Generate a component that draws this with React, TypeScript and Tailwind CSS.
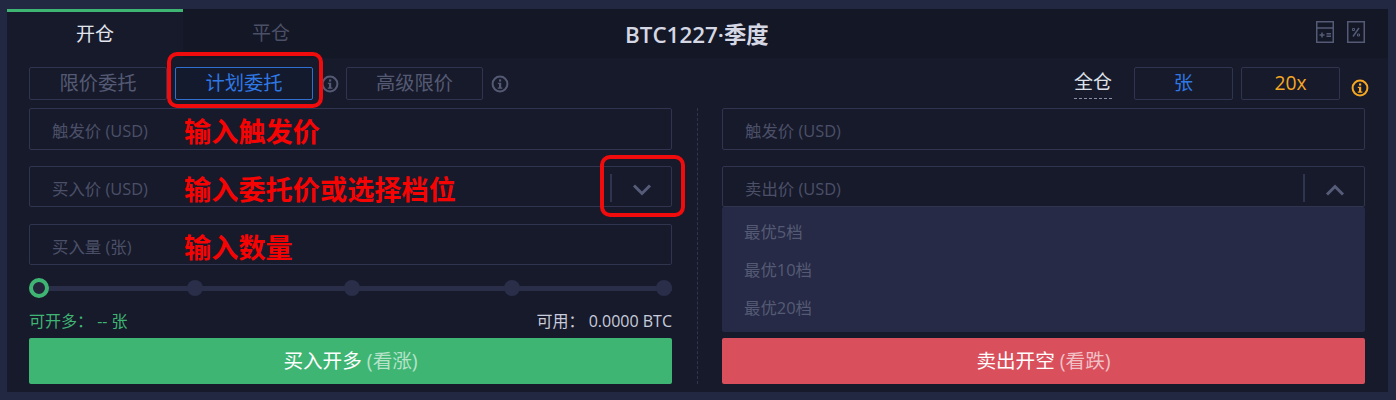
import React from "react";

const FONT = "font-['Open_Sans','Noto_Sans_CJK_SC',sans-serif]";

function Info({ className = "" }: { className?: string }) {
  return (
    <svg viewBox="0 0 18 18" className={className} fill="none">
      <circle cx="9" cy="9" r="7.4" stroke="currentColor" strokeWidth="2" />
      <rect x="8" y="4.4" width="2.2" height="2.2" fill="currentColor" />
      <path d="M6.8 7.8h3.4v4.7h1.2v1.2H6.8v-1.2H8V9H6.8z" fill="currentColor" />
    </svg>
  );
}

function Chevron({ up = false }: { up?: boolean }) {
  return (
    <svg viewBox="0 0 20 12" className="w-[20px] h-[12px] mt-[4px]" fill="none">
      <path d={up ? "M2 10.5 10 2.5l8 8" : "M2 1.5l8 8 8-8"} stroke="#565c78" strokeWidth="3" />
    </svg>
  );
}

function Tab({ children, className = "" }: { children: React.ReactNode; className?: string }) {
  return (
    <div className={`h-[33px] rounded-[2px] border border-[#30344e] flex items-center justify-center text-[19.3px] ${className}`}>
      {children}
    </div>
  );
}

function Field({ label, chevron, up, annotation, tall }: { label: string; chevron?: boolean; up?: boolean; annotation?: string; tall?: boolean }) {
  return (
    <div className={`relative ${tall ? "h-[42px] pt-[4px]" : "h-[41px] pt-[6px]"} rounded-[2px] border border-[#30344e] flex items-center pl-[22px] text-[16.4px] text-[#4b5068]`}>
      <span>{label}</span>
      {annotation && (
        <span className="absolute left-[154px] top-[4px] text-[27.2px] leading-[38px] font-bold text-[#f60404] whitespace-nowrap">{annotation}</span>
      )}
      {chevron && (
        <div className="ml-auto -mt-[4px] flex items-center h-[28px] w-[61px] border-l-2 border-[#30344e] justify-center">
          <Chevron up={up} />
        </div>
      )}
    </div>
  );
}

function Slider() {
  return (
    <div className="relative h-[22px] mt-[12px] flex items-center justify-between">
      <div className="absolute left-0 right-0 top-[9px] h-[5px] bg-[#2a2e48]" />
      <span className="relative w-[20px] h-[20px] rounded-full border-[4px] border-[#3fb574] bg-[#23263a]" />
      <span className="relative w-[16px] h-[16px] rounded-full bg-[#2a2e48] left-[-2px]" />
      <span className="relative w-[16px] h-[16px] rounded-full bg-[#2a2e48] left-[-1px]" />
      <span className="relative w-[16px] h-[16px] rounded-full bg-[#2a2e48] left-[4px]" />
      <span className="relative w-[16px] h-[16px] rounded-full bg-[#2a2e48]" />
    </div>
  );
}

export default function App() {
  return (
    <div className={`w-[1396px] h-[400px] bg-[#232842] pt-[9px] pl-[7px] pr-[8px] pb-[8px] overflow-hidden ${FONT}`}>
      <div className="relative h-[383px] bg-[#171a2b]">
        {/* header */}
        <div className="relative h-[49px] bg-[#141725] flex">
          <div className="w-[176px] bg-[#171a2b] border-t-[3px] border-[#3fb574] flex items-center justify-center text-[19px] text-[#e3e5ee] pb-[1px]">开仓</div>
          <div className="w-[176px] flex items-center justify-center text-[19px] text-[#4b5068]">平仓</div>
          <div className="absolute left-[618px] top-[9px] text-[22.4px] leading-[34px] font-semibold text-[#d5d8e4] whitespace-nowrap">BTC1227·季度</div>
          <div className="absolute right-[23px] top-[12px] flex gap-[13px]">
            <svg viewBox="0 0 18 22" className="w-[18px] h-[22px]" fill="none" stroke="#555b76" strokeWidth="1.5">
              <rect x="0.75" y="0.75" width="16.5" height="20.5" />
              <path d="M1 7h16" />
              <path d="M3.5 14h5M6 11.5v5M10.5 12.7h4.5M10.5 15.3h4.5" />
            </svg>
            <svg viewBox="0 0 18 22" className="w-[18px] h-[22px]" fill="none" stroke="#555b76" strokeWidth="1.5">
              <rect x="0.75" y="0.75" width="16.5" height="20.5" />
              <path d="M12 7 6 15.5" />
              <path d="M5.5 7.5h2v2h-2zM10.5 13h2v2h-2z" strokeWidth="1" />
            </svg>
          </div>
        </div>

        {/* order type row */}
        <div className="flex items-start h-[33px] mt-[9px] pl-[22px] pr-[23px]">
          <Tab className="w-[138px] text-[#555a74] mr-[8px]">限价委托</Tab>
          <Tab className="w-[138px] !border-[#2f6fd0] bg-[#141a2e] text-[#2f78e4]">计划委托</Tab>
          <Info className="w-[18px] h-[18px] text-[#555a74] ml-[8px] mr-[7px] mt-[8px]" />
          <Tab className="w-[137px] text-[#555a74]">高级限价</Tab>
          <Info className="w-[18px] h-[18px] text-[#555a74] ml-[8px] mt-[8px]" />
          <div className="ml-auto mr-[22px] h-[32px] border-b border-dashed border-[#8b90a8] text-[19px] leading-[30px] text-[#dfe1ea]">全仓</div>
          <Tab className="w-[99px] text-[#2f78e4] mr-[8px]">张</Tab>
          <Tab className="w-[99px] text-[#f5a623] font-medium">20x</Tab>
          <Info className="w-[18px] h-[18px] text-[#f5a623] ml-[11px] mt-[12px] mr-[-4px]" />
        </div>

        {/* forms */}
        <div className="flex mt-[8px] pl-[22px] pr-[23px]">
          <div className="w-[643px] flex flex-col">
            <Field tall label="触发价 (USD)" annotation="输入触发价" />
            <div className="mt-[16px]"><Field label="买入价 (USD)" chevron annotation="输入委托价或选择档位" /></div>
            <div className="mt-[17px]"><Field label="买入量 (张)" annotation="输入数量" /></div>
            <Slider />
            <div className="flex justify-between mt-[12px] text-[16px] leading-[20px]">
              <span className="text-[#3fb574]">可开多： -- 张</span>
              <span className="text-[#c9ccdb]">可用： 0.0000 BTC</span>
            </div>
            <button className="mt-[7px] h-[46px] rounded-[2px] bg-[#3fb574] text-[19.6px] text-white">
              买入开多 <span className="text-[#b5e3c9]">(看涨)</span>
            </button>
          </div>
          <div className="w-[50px] flex justify-center">
            <div className="border-l border-dashed border-[#30344e]" />
          </div>
          <div className="relative w-[643px] flex flex-col">
            <Field tall label="触发价 (USD)" />
            <div className="mt-[16px]"><Field label="卖出价 (USD)" chevron up /></div>
            <div className="absolute left-0 right-0 top-[99px] h-[125px] bg-[#262a46] rounded-[2px] pt-[6px] pl-[22px] text-[16.4px] leading-[38px] text-[#555a74]">
              <div>最优5档</div>
              <div>最优10档</div>
              <div>最优20档</div>
            </div>
            <div className="mt-auto h-[46px] rounded-[2px] bg-[#d94f5c] text-[19.6px] text-white flex items-center justify-center gap-[5px]">
              <span>卖出开空</span><span className="text-[#f0c0c5]">(看跌)</span>
            </div>
          </div>
        </div>

        {/* annotations */}
        <div className="absolute left-[160px] top-[43px] w-[156px] h-[56px] rounded-[10px] border-[4px] border-[#f00c0c]" />
        <div className="absolute left-[593px] top-[146px] w-[85px] h-[62px] rounded-[10px] border-[4px] border-[#f00c0c]" />
      </div>
    </div>
  );
}
